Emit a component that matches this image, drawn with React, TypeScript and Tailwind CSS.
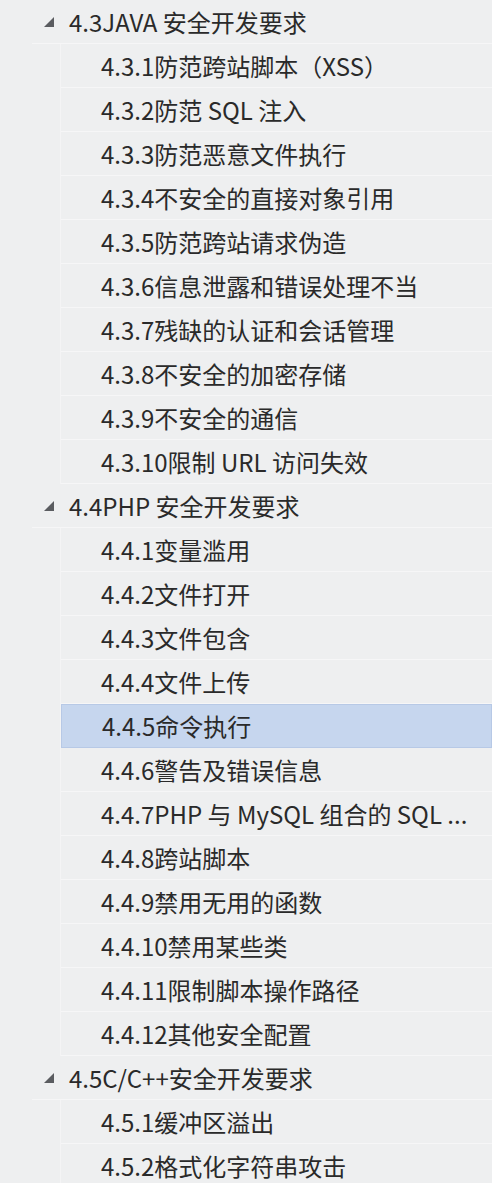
import React from "react";

type Node = { title: string; children: string[] };

const tree: Node[] = [
  {
    title: "4.3JAVA 安全开发要求",
    children: [
      "4.3.1防范跨站脚本（XSS）",
      "4.3.2防范 SQL 注入",
      "4.3.3防范恶意文件执行",
      "4.3.4不安全的直接对象引用",
      "4.3.5防范跨站请求伪造",
      "4.3.6信息泄露和错误处理不当",
      "4.3.7残缺的认证和会话管理",
      "4.3.8不安全的加密存储",
      "4.3.9不安全的通信",
      "4.3.10限制 URL 访问失效",
    ],
  },
  {
    title: "4.4PHP 安全开发要求",
    children: [
      "4.4.1变量滥用",
      "4.4.2文件打开",
      "4.4.3文件包含",
      "4.4.4文件上传",
      "4.4.5命令执行",
      "4.4.6警告及错误信息",
      "4.4.7PHP 与 MySQL 组合的 SQL ...",
      "4.4.8跨站脚本",
      "4.4.9禁用无用的函数",
      "4.4.10禁用某些类",
      "4.4.11限制脚本操作路径",
      "4.4.12其他安全配置",
    ],
  },
  {
    title: "4.5C/C++安全开发要求",
    children: ["4.5.1缓冲区溢出", "4.5.2格式化字符串攻击"],
  },
];

const font = { fontFamily: '"Noto Sans CJK SC", "Noto Sans", sans-serif' };

function Caret() {
  return (
    <svg width="10" height="10" viewBox="0 0 10 10" className="shrink-0">
      <path d="M10 0 L10 10 L0 10 Z" fill="#5a5c60" />
    </svg>
  );
}

export default function App() {
  const selected = "4.4.5命令执行";
  return (
    <div className="w-[492px] h-[1183px] overflow-hidden bg-[#eeeff0] text-[#2a2a2a]" style={font}>
      <div className="pl-8">
        {tree.map((node) => (
          <div key={node.title}>
            <div className="h-11 flex items-center gap-[15px] pl-[12px] text-[24px] border-b border-[#f6f6f7]">
              <Caret />
              <span className="whitespace-nowrap">{node.title}</span>
            </div>
            <div className="ml-7 border-l border-[#f4f4f5]">
              {node.children.map((c) => (
                <div
                  key={c}
                  className={
                    c === selected
                      ? "h-11 flex items-center pl-10 pr-2 text-[24px] bg-[#c6d6ee] border border-[#b7c9e6]"
                      : "h-11 flex items-center pl-10 pr-2 text-[24px] border-b border-[#f6f6f7]"
                  }
                >
                  <span className="whitespace-nowrap">{c}</span>
                </div>
              ))}
            </div>
          </div>
        ))}
      </div>
    </div>
  );
}
